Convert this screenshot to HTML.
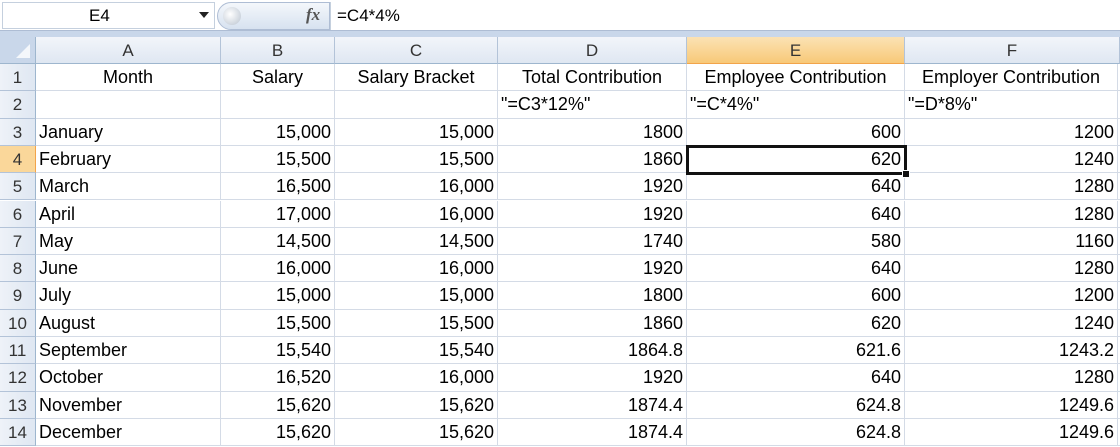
<!DOCTYPE html>
<html><head><meta charset="utf-8"><style>
*{margin:0;padding:0;box-sizing:border-box}
body{width:1120px;height:447px;overflow:hidden;background:#fff;font-family:"Liberation Sans",sans-serif;position:relative;color:#000}
.fb{position:absolute;left:0;top:0;width:1120px;height:31px;background:#fff;border-bottom:1px solid #aebdd4}
.band{position:absolute;left:0;top:31px;width:1120px;height:6px;background:#c9d7ea}
.nb{position:absolute;left:2px;top:2px;width:213px;height:27px;border:1px solid #c5d0de;font-size:17px;line-height:25px;padding-left:86px}
.arr{position:absolute;left:199px;top:12px;width:0;height:0;border-left:5px solid transparent;border-right:5px solid transparent;border-top:6px solid #222}
.pill{position:absolute;left:217px;top:2px;width:113px;height:28px;border-radius:14px 0 0 14px;background:linear-gradient(#f4f7fb,#d7e2f0);border:1px solid #aebdd4}
.pill .c{position:absolute;left:5px;top:4px;width:18px;height:18px;border-radius:9px;background:radial-gradient(circle at 40% 40%,#fff,#b9c3cf)}
.fx{position:absolute;left:306px;top:5px;font-family:"Liberation Serif",serif;font-style:italic;font-weight:bold;font-size:17px;color:#555}
.ft{position:absolute;left:330px;top:2px;height:28px;width:790px;border-left:1px solid #c5d0de;font-size:17px;line-height:28px;padding-left:6px}
.hd{position:absolute;top:37px;height:27px;background:linear-gradient(#f2f5fa,#dfe7f2);border-right:1px solid #b3c3d8;border-bottom:1px solid #9eb6ce;font-size:17px;line-height:27px;text-align:center;color:#333}
.hd.sel{background:linear-gradient(#fbe2b4,#f8c978);border-bottom:1px solid #f2a44a}
.rh{position:absolute;left:0;width:36px;height:27.3px;background:linear-gradient(90deg,#eef2f8,#dfe7f2);border-right:1px solid #9eb6ce;border-bottom:1px solid #b3c3d8;font-size:17px;line-height:27px;text-align:center;color:#333}
.rh.sel{background:#fad79a;border-right:1px solid #f2a44a}
.row{position:absolute;left:36px;width:1084px;height:27.3px;border-bottom:1px solid #d4dbe6}
.cell{position:absolute;top:0;height:27px;border-right:1px solid #d4dbe6;font-size:18px;line-height:27px;white-space:nowrap;overflow:hidden;padding:0 3px}
.a{left:0;width:185px}.b{left:185px;width:114px;text-align:right}.cc{left:299px;width:163px;text-align:right}.d{left:462px;width:189px;text-align:right}.e{left:651px;width:218px;text-align:right}.f{left:869px;width:213px;text-align:right}
.ctr{text-align:center!important}.lft{text-align:left!important}
.selbox{position:absolute;left:686px;top:145px;width:221px;height:30px;border:3px solid #111}
.selbox:after{content:"";position:absolute;right:-6px;bottom:-6px;width:6px;height:6px;background:#111;border:1px solid #fff}
.corner{position:absolute;left:0;top:37px;width:36px;height:27px;background:#c9d7ea;border-right:1px solid #9eb6ce;border-bottom:1px solid #9eb6ce}
.corner:after{content:"";position:absolute;right:5px;bottom:5px;border-left:14px solid transparent;border-bottom:14px solid #f4f7fb}
</style></head><body>
<div class="fb"><div class="nb">E4</div><div class="arr"></div><div class="pill"><div class="c"></div></div><div class="fx">fx</div><div class="ft">=C4*4%</div></div>
<div class="band"></div>
<div class="corner"></div>
<div class="hd" style="left:36px;width:185px">A</div>
<div class="hd" style="left:221px;width:114px">B</div>
<div class="hd" style="left:335px;width:163px">C</div>
<div class="hd" style="left:498px;width:189px">D</div>
<div class="hd sel" style="left:687px;width:218px">E</div>
<div class="hd" style="left:905px;width:215px">F</div>

<div class="rh" style="top:64px">1</div><div class="row" style="top:64px"><div class="cell a ctr">Month</div><div class="cell b ctr">Salary</div><div class="cell cc ctr">Salary Bracket</div><div class="cell d ctr">Total Contribution</div><div class="cell e ctr">Employee Contribution</div><div class="cell f ctr">Employer Contribution</div></div>
<div class="rh" style="top:91.3px">2</div><div class="row" style="top:91.3px"><div class="cell a"></div><div class="cell b"></div><div class="cell cc"></div><div class="cell d lft">"=C3*12%"</div><div class="cell e lft">"=C*4%"</div><div class="cell f lft">"=D*8%"</div></div>
<div class="rh" style="top:118.6px">3</div><div class="row" style="top:118.6px"><div class="cell a">January</div><div class="cell b">15,000</div><div class="cell cc">15,000</div><div class="cell d">1800</div><div class="cell e">600</div><div class="cell f">1200</div></div>
<div class="rh sel" style="top:145.9px">4</div><div class="row" style="top:145.9px"><div class="cell a">February</div><div class="cell b">15,500</div><div class="cell cc">15,500</div><div class="cell d">1860</div><div class="cell e">620</div><div class="cell f">1240</div></div>
<div class="rh" style="top:173.2px">5</div><div class="row" style="top:173.2px"><div class="cell a">March</div><div class="cell b">16,500</div><div class="cell cc">16,000</div><div class="cell d">1920</div><div class="cell e">640</div><div class="cell f">1280</div></div>
<div class="rh" style="top:200.5px">6</div><div class="row" style="top:200.5px"><div class="cell a">April</div><div class="cell b">17,000</div><div class="cell cc">16,000</div><div class="cell d">1920</div><div class="cell e">640</div><div class="cell f">1280</div></div>
<div class="rh" style="top:227.8px">7</div><div class="row" style="top:227.8px"><div class="cell a">May</div><div class="cell b">14,500</div><div class="cell cc">14,500</div><div class="cell d">1740</div><div class="cell e">580</div><div class="cell f">1160</div></div>
<div class="rh" style="top:255.1px">8</div><div class="row" style="top:255.1px"><div class="cell a">June</div><div class="cell b">16,000</div><div class="cell cc">16,000</div><div class="cell d">1920</div><div class="cell e">640</div><div class="cell f">1280</div></div>
<div class="rh" style="top:282.4px">9</div><div class="row" style="top:282.4px"><div class="cell a">July</div><div class="cell b">15,000</div><div class="cell cc">15,000</div><div class="cell d">1800</div><div class="cell e">600</div><div class="cell f">1200</div></div>
<div class="rh" style="top:309.7px">10</div><div class="row" style="top:309.7px"><div class="cell a">August</div><div class="cell b">15,500</div><div class="cell cc">15,500</div><div class="cell d">1860</div><div class="cell e">620</div><div class="cell f">1240</div></div>
<div class="rh" style="top:337px">11</div><div class="row" style="top:337px"><div class="cell a">September</div><div class="cell b">15,540</div><div class="cell cc">15,540</div><div class="cell d">1864.8</div><div class="cell e">621.6</div><div class="cell f">1243.2</div></div>
<div class="rh" style="top:364.3px">12</div><div class="row" style="top:364.3px"><div class="cell a">October</div><div class="cell b">16,520</div><div class="cell cc">16,000</div><div class="cell d">1920</div><div class="cell e">640</div><div class="cell f">1280</div></div>
<div class="rh" style="top:391.6px">13</div><div class="row" style="top:391.6px"><div class="cell a">November</div><div class="cell b">15,620</div><div class="cell cc">15,620</div><div class="cell d">1874.4</div><div class="cell e">624.8</div><div class="cell f">1249.6</div></div>
<div class="rh" style="top:418.9px">14</div><div class="row" style="top:418.9px"><div class="cell a">December</div><div class="cell b">15,620</div><div class="cell cc">15,620</div><div class="cell d">1874.4</div><div class="cell e">624.8</div><div class="cell f">1249.6</div></div>
<div class="selbox"></div>
</body></html>
